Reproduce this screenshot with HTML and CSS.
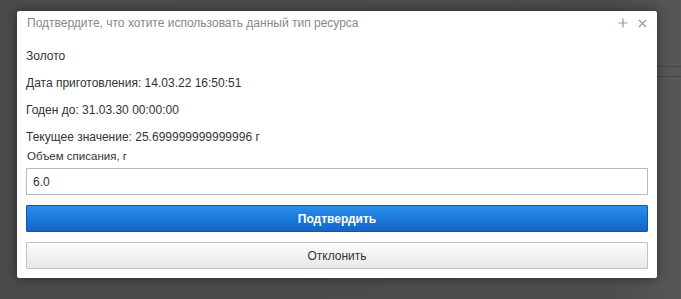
FILE: index.html
```html
<!DOCTYPE html>
<html lang="ru">
<head>
<meta charset="utf-8">
<link rel="stylesheet" href="styles.css">
</head>
<body>
<div class="dialog">
  <div class="header">
    <span class="title">Подтвердите, что хотите использовать данный тип ресурса</span>
    <div class="tools">
      <svg class="icon" width="10" height="10" viewBox="0 0 10 10"><path d="M5 0.5V9.5M0.5 5H9.5" stroke="#8c9aab" stroke-width="1.2" fill="none"/></svg>
      <svg class="icon" width="9" height="9" viewBox="0 0 9 9"><path d="M1 1L8 8M8 1L1 8" stroke="#8c9aab" stroke-width="1.2" fill="none"/></svg>
    </div>
  </div>
  <div class="content">
    <p class="line">Золото</p>
    <p class="line">Дата приготовления: 14.03.22 16:50:51</p>
    <p class="line">Годен до: 31.03.30 00:00:00</p>
    <p class="line last">Текущее значение: 25.699999999999996 г</p>
    <label class="label">Объем списания, г</label>
    <input class="field" type="text" value="6.0">
    <button class="btn primary">Подтвердить</button>
    <button class="btn secondary">Отклонить</button>
  </div>
</div>
</body>
</html>
```
FILE: styles.css
```css
html, body {
  margin: 0;
  height: 100%;
}
body {
  background-color: #4b4b4b;
  background-image:
    linear-gradient(to bottom, transparent 66px, #454545 66px, #454545 67px, transparent 67px, transparent 76px, #454545 76px, #454545 77px, transparent 77px),
    linear-gradient(to right, #4a4a4a 0%, #4c4c4c 90%, #575757 100%);
  padding: 11px 0 0 17px;
  box-sizing: border-box;
  font-family: "Liberation Sans", Arial, sans-serif;
  font-size: 12px;
  color: #333;
}
.dialog {
  width: 640px;
  background: #fff;
  border-radius: 2px;
  box-shadow: 0 0 10px rgba(0, 0, 0, 0.45);
}
.header {
  height: 24px;
  display: flex;
  align-items: center;
  justify-content: space-between;
  padding: 0 10px 0 10px;
}
.title {
  color: #888;
  font-size: 12px;
  line-height: 24px;
}
.tools {
  display: flex;
  align-items: center;
  gap: 10px;
}
.icon {
  display: block;
}
.content {
  padding: 14px 9px 9px 9px;
  display: flex;
  flex-direction: column;
}
.line {
  margin: 0 0 12px 0;
  line-height: 15px;
  font-size: 12px;
  color: #333;
}
.line.last {
  margin-bottom: 4px;
}
.label {
  font-size: 11.5px;
  line-height: 14px;
  color: #333;
  margin: 0 0 5px 1px;
}
.field {
  height: 27px;
  box-sizing: border-box;
  border: 1px solid #b9b9b9;
  padding: 0 6px;
  font-family: "Liberation Sans", Arial, sans-serif;
  font-size: 12px;
  color: #333;
  outline: none;
  margin: 0;
}
.btn {
  height: 27px;
  box-sizing: border-box;
  margin: 10px 0 0 0;
  font-family: "Liberation Sans", Arial, sans-serif;
  font-size: 12px;
  border-radius: 1px;
  cursor: pointer;
}
.primary {
  background: linear-gradient(to bottom, #2b8ee9 0%, #1b79dc 50%, #1565c7 100%);
  border: 1px solid #1556a8;
  color: #fff;
  font-weight: bold;
}
.secondary {
  background: linear-gradient(to bottom, #fbfbfb 0%, #f2f2f2 50%, #e8e8e8 100%);
  border: 1px solid #c2c2c2;
  color: #333;
}
```
